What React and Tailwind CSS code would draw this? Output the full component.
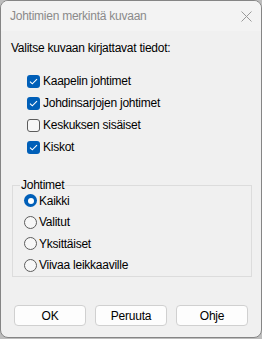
import React from 'react';

const font = { fontFamily: '"Segoe UI", "Liberation Sans", Arial, sans-serif' };

const Check = ({ checked, label }) => (
  <div className="flex items-center h-[22px]">
    {checked ? (
      <span className="w-[13px] h-[13px] rounded-[3px] bg-[#005fb8] flex items-center justify-center">
        <svg width="9" height="7" viewBox="0 0 9 7" fill="none">
          <path d="M1 3.6 L3.3 5.8 L8 1.2" stroke="#fff" strokeWidth="1.1" />
        </svg>
      </span>
    ) : (
      <span className="w-[13px] h-[13px] rounded-[3px] border border-[#5c5c5c] bg-[#f7f7f7]" />
    )}
    <span className="ml-[3px] text-[12px] text-black leading-none">{label}</span>
  </div>
);

const Radio = ({ checked, label }) => (
  <div className="flex items-center h-[21.5px]">
    {checked ? (
      <span className="w-[13px] h-[13px] rounded-full bg-[#005fb8] flex items-center justify-center">
        <span className="w-[6px] h-[6px] rounded-full bg-white" />
      </span>
    ) : (
      <span className="w-[13px] h-[13px] rounded-full border border-[#5c5c5c] bg-[#f7f7f7]" />
    )}
    <span className="ml-[2px] text-[12px] text-black leading-none">{label}</span>
  </div>
);

const Btn = ({ children }) => (
  <button className="w-[72px] h-[21px] rounded-[4px] border border-[#d0d0d0] bg-[#fdfdfd] text-[12px] text-black leading-none">
    {children}
  </button>
);

export default function App() {
  return (
    <div className="w-[262px] h-[339px] bg-[#bdbdbd] tracking-[-0.25px]" style={font}>
      <div className="w-[262px] h-[338px] rounded-[8px] border border-[#858585] bg-[#f0f0f0] overflow-hidden flex flex-col">
        <div className="h-[30px] bg-[#f3f3f3] flex items-center justify-between pl-[9px] pr-[9px]">
          <span className="text-[12px] text-[#8a8a8a]">Johtimien merkintä kuvaan</span>
          <svg width="11" height="11" viewBox="0 0 11 11" fill="none">
            <path d="M0.5 0.5 L10.5 10.5 M10.5 0.5 L0.5 10.5" stroke="#9a9a9a" strokeWidth="1" />
          </svg>
        </div>
        <div className="flex flex-col px-[10px]">
          <div className="text-[12px] text-black mt-[10px] leading-[14px]">Valitse kuvaan kirjattavat tiedot:</div>
          <div className="flex flex-col pl-[16px] mt-[15px]">
            <Check checked label="Kaapelin johtimet" />
            <Check checked label="Johdinsarjojen johtimet" />
            <Check label="Keskuksen sisäiset" />
            <Check checked label="Kiskot" />
          </div>
          <fieldset className="mt-[20px] ml-[1px] w-[240px] h-[99px] border border-[#dcdcdc] pl-[11px] pt-0">
            <legend className="text-[12px] text-black px-[1px] ml-[-4px] leading-[14px] mb-[-2px]">Johtimet</legend>
            <Radio checked label="Kaikki" />
            <Radio label="Valitut" />
            <Radio label="Yksittäiset" />
            <Radio label="Viivaa leikkaaville" />
          </fieldset>
          <div className="flex gap-[9px] mt-[28px] pl-[3px]">
            <Btn>OK</Btn>
            <Btn>Peruuta</Btn>
            <Btn>Ohje</Btn>
          </div>
        </div>
      </div>
    </div>
  );
}
